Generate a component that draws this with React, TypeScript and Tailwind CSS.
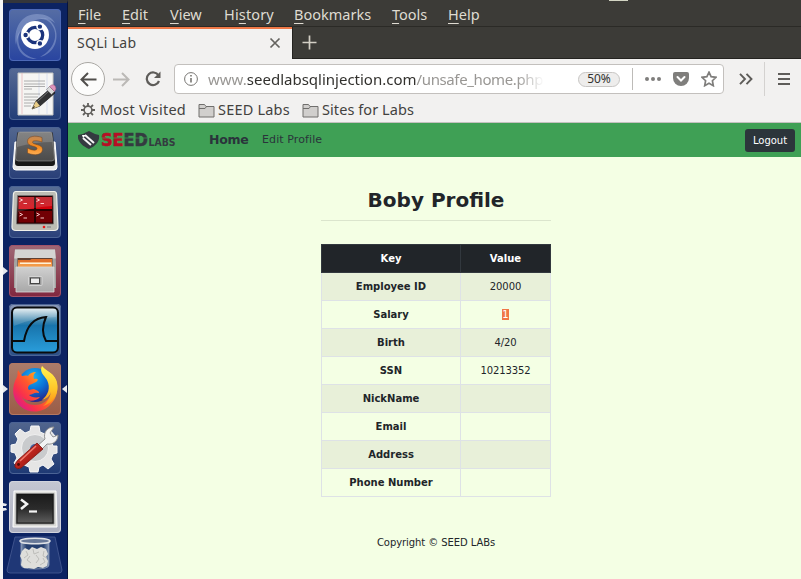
import type { ReactNode } from "react";

const UI = "font-['Noto_Sans','Open_Sans',sans-serif]";
const PAGE = "font-['DejaVu_Sans',sans-serif]";

const Pic = ({ children }: { children: ReactNode }) => (
  <svg viewBox="0 0 52 52" className="block h-[52px] w-[52px]" fill="none">{children}</svg>
);

function Defs() {
  return (
    <svg className="absolute h-0 w-0" aria-hidden="true">
      <defs>
        <linearGradient id="grey" x1="0" y1="0" x2="0" y2="1"><stop stopColor="#d0d0d0" /><stop offset="1" stopColor="#a8a8a8" /></linearGradient>
        <linearGradient id="key" x1="0" y1="0" x2="0" y2="1"><stop stopColor="#6b6b6b" /><stop offset="1" stopColor="#4b4b4b" /></linearGradient>
        <linearGradient id="orange" gradientUnits="userSpaceOnUse" x1="0" y1="10" x2="0" y2="29"><stop stopColor="#c48852" /><stop offset=".5" stopColor="#f68a1c" /><stop offset="1" stopColor="#ffb45c" /></linearGradient>
        <linearGradient id="red" x1="0" y1="0" x2="0" y2="1"><stop stopColor="#b80c14" /><stop offset="1" stopColor="#d4000a" /></linearGradient>
        <linearGradient id="shark" x1="0" y1="0" x2="0" y2="1"><stop stopColor="#f0f4f6" /><stop offset=".12" stopColor="#a8c8d8" /><stop offset=".3" stopColor="#3e87b0" /><stop offset=".4" stopColor="#1874ac" /><stop offset="1" stopColor="#2a9edb" /></linearGradient>
        <linearGradient id="fox" gradientUnits="userSpaceOnUse" x1="8" y1="44" x2="44" y2="12"><stop stopColor="#d81a90" /><stop offset=".25" stopColor="#f9304c" /><stop offset=".5" stopColor="#ff5a2c" /><stop offset=".75" stopColor="#ffa020" /><stop offset="1" stopColor="#ffe03a" /></linearGradient>
        <linearGradient id="flame" x1="0" y1="0" x2="0" y2="1"><stop stopColor="#fff44f" /><stop offset=".6" stopColor="#ffc428" /><stop offset="1" stopColor="#ff8a16" /></linearGradient>
        <radialGradient id="globe" cx=".45" cy=".25" r=".8"><stop stopColor="#16b5f2" /><stop offset=".5" stopColor="#0b6fd4" /><stop offset="1" stopColor="#2a1a80" /></radialGradient>
        <linearGradient id="handle" x1="0" y1="0" x2="1" y2="1"><stop stopColor="#e04a40" /><stop offset=".5" stopColor="#b8231c" /><stop offset="1" stopColor="#7e0d0a" /></linearGradient>
        <linearGradient id="screen" x1="0" y1="0" x2="0" y2="1"><stop stopColor="#1c1c1c" /><stop offset=".5" stopColor="#2b2b2b" /><stop offset="1" stopColor="#5c5c5c" /></linearGradient>
        <linearGradient id="glass" x1="0" y1="0" x2="1" y2="0"><stop stopColor="#8296b5" /><stop offset=".2" stopColor="#26406f" /><stop offset=".8" stopColor="#26406f" /><stop offset="1" stopColor="#8a9cba" /></linearGradient>
      </defs>
    </svg>
  );
}

const Dash = () => (
  <Pic>
    <path d="M7 36C4 20 12 5 28 5c8 0 15 3 18 9-6-5-13-5-19-3C16 14 9 23 7 36z" fill="#a9bbe0" opacity=".42" />
    <path d="M27 11c8-3 15 1 18 9 4 11-3 22-14 28 15-3 21-21 13-33-3-5-8-8-17-4z" fill="#a9bbe0" opacity=".42" />
    <path d="M11 22c-5 14 2 25 17 28C14 51 7 40 8 30c0-3 1-6 3-8z" fill="#a9bbe0" opacity=".4" />
    <circle cx="26" cy="26" r="14" fill="#fff" />
    <circle cx="26" cy="26" r="7.700" stroke="#1b347c" strokeWidth="3.300" />
    <g stroke="#fff" strokeWidth="1.400" fill="#1b347c"><circle cx="16.600" cy="26" r="2.900" /><circle cx="30.900" cy="17.600" r="2.900" /><circle cx="30.900" cy="34.500" r="2.900" /></g>
  </Pic>
);

const Editor = () => (
  <Pic>
    <path d="M9 5h35v42H9z" fill="#f5f5f3" stroke="#c9c9c4" />
    <path d="M13 5v41" stroke="#e8b1b5" strokeWidth=".7" /><path d="M38 5v41M30 5v41" stroke="#c8d2ec" strokeWidth=".6" />
    <path d="M15 13h21M15 16h21M15 18.500h21M15 21h8M15 26h16M15 29h14M15 32h13M15 35h11M15 38h7" stroke="#999" strokeWidth=".8" />
    <path d="m23 41 4-8 15-13 4 5-15 13z" fill="#333" stroke="#191919" strokeWidth=".7" />
    <path d="m23 41 4-8 4 5z" fill="#e9cd87" /><path d="m23 41 2-3 1 1z" fill="#222" />
    <path d="m28.500 33.500 12-11" stroke="#777" /><path d="m37.500 21.500 3-3 5 5-3 3z" fill="#d9d9d9" stroke="#666" strokeWidth=".5" />
    <path d="m40.500 18.500 2-1.500q4-1 4.500 4l-1.500 2.500z" fill="#dd94bd" stroke="#975676" strokeWidth=".5" />
  </Pic>
);

const Sublime = () => (
  <Pic>
    <path d="M6 15h40l2 25q0 3-3 3H7q-3 0-3-3z" fill="#e8e8e8" stroke="#fff" />
    <path d="M8 7q0-2 2-2h32q2 0 2 2l2 29q0 3-3 3H9q-3 0-3-3z" fill="#181818" />
    <path d="M9 7q0-2 2-2h30q2 0 2 2l2.500 24q0 3-3 3H9.500q-3 0-3-3z" fill="url(#key)" stroke="#999" strokeWidth=".6" />
    <path d="M9 7q0-2 2-2h30q2 0 2 2l.5 8Q26 15 8 20z" fill="#fff" opacity=".17" />
    <path d="M33 10.500v4.500c-4-1.500-9.500-2-9.500.3 0 2.500 10 1.700 10 7s-7 7-15 3.700v-5c5.500 3 9.500 2.700 9.500.5 0-2.800-9.500-1.500-9.500-7s8-6.500 14.500-4z" fill="url(#orange)" stroke="#744018" strokeWidth=".5" />
  </Pic>
);

const Terminator = () => (
  <Pic>
    <path d="M7 5.500h38q2.500 0 2.600 3L49 41q0 3.500-4 3.500H7q-4 0-4-3.500L4.400 8.500q.1-3 2.600-3z" fill="#bdbdb5" stroke="#f2f2eb" strokeWidth="1.200" />
    <path d="M8.500 9.500h35.500l.5 28.500H7.500z" fill="#270000" stroke="#777" strokeWidth=".8" />
    <path d="M9.500 11h15.500v12H9.500zm17.500 0h16v12H27z" fill="url(#red)" /><path d="M9.500 25h15.500v11.500H9.500zm17.500 0h16v11.500H27z" fill="#720004" />
    <path d="M9 11h34v9Q26 21 9 26z" fill="#fff" opacity=".14" />
    <path d="m10.500 12.500 3 1.500-3 1.500m4 2h3.500m9.500-5 3 1.500-3 1.500m4 2h3.500M10.500 27l3 1.500-3 1.500m4 2h3.500M27.500 27l3 1.500-3 1.500m4 2h3.500" stroke="#ffdcdc" strokeWidth=".9" />
    <path d="M38 41h4" stroke="#999" strokeWidth="2" /><circle cx="35" cy="41" r="1.300" fill="#ed1717" />
  </Pic>
);

const Files = () => (
  <Pic>
    <path d="M6 4.500h40l1 14V43H5V18.500z" fill="#a4a4a2" /><path d="M6 4.500h40l.8 9H5.200z" fill="#d4d4d2" /><path d="M8.500 13h35v11h-35z" fill="#5e4032" />
    <path d="M9 15h12l1.500-1h20.500v9H9z" fill="#e0702a" /><path d="M9 17.500h34v5H9z" fill="#f39a48" /><path d="M11 17.500h31v1.500H11z" fill="#fff0d8" />
    <path d="M7 22h38v25H7z" fill="url(#grey)" stroke="#dadada" strokeWidth=".8" />
    <rect x="19.500" y="31.500" width="13.500" height="9" rx="1" fill="#9a9a9a" stroke="#e5e5e5" strokeWidth=".7" /><rect x="21.500" y="33" width="9" height="5.500" fill="#ececec" stroke="#444" />
  </Pic>
);

const Wireshark = () => (
  <Pic>
    <rect x="3" y="3.500" width="46" height="45" rx="5" fill="url(#shark)" stroke="#080b0d" strokeWidth="2" />
    <path d="M5 5h42v8Q22 14 5 22z" fill="#fff" opacity=".14" />
    <path d="M3 37h12c2-12 8-23 22-24-4 9-4 17 0 24h12" stroke="#080b0d" strokeWidth="2" />
  </Pic>
);

const Firefox = () => (
  <Pic>
    <circle cx="26" cy="22" r="17" fill="url(#globe)" />
    <path d="M33 3c1 5 7 8 9 15 4 13-4 24-16 24-7 0-11-3-13-8 4 5 14 5 18 0-5 1-9 0-11-2 4 0 5-3 9-2 2 0 1-2-2-3-3-2-5 0-7 0-2-2-1-5 3-6l4-2c3-2 2-4-2-3-1-4 0-5 2-7-4 0-7 2-8 4-3-1-4 0-6 0l-4-6c-1 3 0 5-1 7C2 24 3 36 11 43c9 8 23 7 30-1 7-7 9-16 6-25C44 10 36 8 33 3z" fill="url(#fox)" />
    <path d="M33 3c-3 6 2 9 5 14 4 8 1 15-5 20 4-1 8-4 9-8-1 6-4 11-8 14 13-3 18-19 12-28C43 9 37 8 33 3z" fill="url(#flame)" />
  </Pic>
);

const Settings = () => (
  <Pic>
    <path d="M22 4h8l1 6 5 2 5-4 5 6-4 5 2 5h4v7l-4 1-2 5 3 5-6 5-5-4-4 2-1 5h-8l-1-5-5-2-5 3-5-5 3-5-2-5-4-1v-7l5-1 2-5-3-5 5-5 5 4 5-2z" fill="#e5e5e5" stroke="#f9f9f9" />
    <circle cx="26" cy="26" r="13.500" fill="#c9cbcd" stroke="#f5f5f5" strokeWidth=".8" /><circle cx="26" cy="27" r="5" fill="#4564a2" />
    <path d="m27 25 9-8c-2-6 2-12 9-12l-4 6 3 4 5-2c0 6-5 10-11 9l-7 7z" fill="#f2f2f2" stroke="#919191" />
    <path d="m28 21 6 6L12 46q-4 2-6-1-1-3 3-7z" fill="url(#handle)" stroke="#7c1410" strokeWidth=".8" />
    <path d="m27 24-16 15" stroke="#f17c6f" strokeWidth="1.500" /><circle cx="9.500" cy="42.500" r="1.400" fill="#4d0b09" />
  </Pic>
);

const Terminal = () => (
  <Pic>
    <path d="M5 10h42l1 36H4z" fill="#dcdcd9" stroke="#fff" />
    <path d="M7 12.500h38v30.500H7z" fill="#161616" stroke="#888" strokeWidth=".8" /><path d="M8.500 14h35v27.500h-35z" fill="url(#screen)" />
    <path d="m12 18.500 6 4.500-6 5" stroke="#f4f4f4" strokeWidth="2.500" /><path d="M20 30.500h8" stroke="#f4f4f4" strokeWidth="2.200" />
  </Pic>
);

const Trash = () => (
  <svg viewBox="0 0 60 38" className="mt-[2px] block h-[38px] w-[60px]" fill="none">
    <path d="M10 1h40l7 33q0 3-3 3H5q-3 0-3-3z" fill="#1f3776" stroke="#475c94" strokeWidth=".8" />
    <path d="M16 5v24q0 4 14 4t14-4V5" fill="url(#glass)" stroke="#8d9dba" strokeWidth=".8" />
    <path d="m17 15 3-3 4 2 3-3 5 2 4-2 5 2 2 5-2 3 2 4-1 5-4 2-5-1-4 2-5-1-5 0-3-3 1-5-2-4z" fill="#dededb" />
    <path d="m21 15 2 4-4 3m9-9 1 5 5-2m5-1-1 5 4 2m-17-2-3 4 4 3m5-8 3 4-3 4m7-5 2 4-5 3" stroke="#b9b9b5" strokeWidth=".9" />
    <ellipse cx="30" cy="5" rx="15" ry="2.800" fill="#687998" stroke="#dfe2e6" strokeWidth="1.500" />
  </svg>
);

const launchers = [
  { id: "dash", icon: <Dash />, tile: "bg-linear-to-b from-[#566da4] to-[#2944a0] border-[#4d69b7]" },
  { id: "editor", icon: <Editor />, tile: "bg-linear-to-b from-[#566a95] to-[#233e77] border-[#4b6395]" },
  { id: "sublime", icon: <Sublime />, tile: "bg-linear-to-b from-[#53678f] to-[#293f78] border-[#4b6395]" },
  { id: "terminator", icon: <Terminator />, tile: "bg-linear-to-b from-[#596d94] to-[#2b417a] border-[#4b6395]" },
  { id: "files", icon: <Files />, tile: "bg-linear-to-b from-[#9f6876] to-[#80273f] border-[#a25269]" },
  { id: "wireshark", icon: <Wireshark />, tile: "bg-linear-to-b from-[#8a98b7] to-[#294f86] border-[#4b6395]" },
  { id: "firefox", icon: <Firefox />, tile: "bg-linear-to-b from-[#aa7c6b] to-[#9a5c46] border-[#b37862]" },
  { id: "settings", icon: <Settings />, tile: "bg-linear-to-b from-[#52668e] to-[#1e3974] border-[#4b6395]" },
  { id: "terminal", icon: <Terminal />, tile: "bg-linear-to-b from-[#c5c7d2] to-[#adb0c0] border-[#d1d3dc]" },
];

const LeftArrow = () => (
  <svg viewBox="0 0 5 8" className="absolute top-[22px] -left-[6px] h-2 w-[5px]"><path d="M0 0l5 4-5 4z" fill="#e6e9ee" /></svg>
);

function Launcher() {
  return (
    <aside className="flex w-[65px] shrink-0 flex-col items-center gap-[7px] border-t-[3px] border-r border-t-[#34363b] border-r-[#06133c] bg-[#0c2362] pt-[6px]">
      {launchers.map((l) => (
        <div key={l.id} className={`relative h-[52px] w-[52px] shrink-0 rounded-[4px] ${l.tile}`}>
          {l.icon}
          <span className={`absolute inset-0 rounded-[4px] border ${l.tile.split(" ").pop()}`} />
          {(l.id === "files" || l.id === "firefox") && <LeftArrow />}
          {l.id === "firefox" && (
            <svg viewBox="0 0 5 8" className="absolute top-[22px] -right-[6px] h-2 w-[5px]"><path d="M5 0L0 4l5 4z" fill="#e6e9ee" /></svg>
          )}
          {l.id === "terminal" && (
            <svg viewBox="0 0 5 8" className="absolute top-[22px] -left-[6px] h-2 w-[5px]"><path d="M0 0l4 1-1 2H0zm0 5h3l1 2-4 1z" fill="#e6e9ee" /></svg>
          )}
        </div>
      ))}
      <div className="-mt-[6px]"><Trash /></div>
    </aside>
  );
}

const menus = [
  { pre: "", key: "F", post: "ile", w: "w-[44px]" },
  { pre: "", key: "E", post: "dit", w: "w-[48px]" },
  { pre: "", key: "V", post: "iew", w: "w-[54px]" },
  { pre: "Hi", key: "s", post: "tory", w: "w-[70px] tracking-[0.15px]" },
  { pre: "", key: "B", post: "ookmarks", w: "w-[98px]" },
  { pre: "", key: "T", post: "ools", w: "w-[56px]" },
  { pre: "", key: "H", post: "elp", w: "w-[50px]" },
];

const Folder = () => (
  <svg viewBox="0 0 17 15" className="mt-[2px] h-[15px] w-[17px]" fill="#d1cfcd" stroke="#706f6d"><path d="M1 13V1.500h5.500l1.500 2h8V14H1z" /><path d="M1 5.500h6l1.500-2" fill="none" /></svg>
);

function Chrome() {
  return (
    <header className={`${UI} text-[15px] text-[#43423f]`}>
      <div className="flex h-[27px] items-center border-b border-[#2b2a26] bg-[#3c3b37] pt-[3px] pl-[10px] text-[14.5px] text-[#dfdbd2]">
        {menus.map((m) => (
          <span key={m.key} className={`${m.w} whitespace-nowrap`}>
            {m.pre}<span className="underline decoration-1 underline-offset-[3px]">{m.key}</span>{m.post}
          </span>
        ))}
        <span className="mb-auto ml-[111px] -mt-[3px] h-px w-[19px] bg-[#d3d5c3]" />
      </div>
      <div className="flex h-8 bg-[#3c3b37]">
        <div className="flex w-[224px] items-center justify-between border-t-2 border-[#ef7847] bg-[#f2f1f0] pr-[11px] pb-[2px] pl-[9px] text-[14px]">
          <span className="-mt-[2px] tracking-[0.3px]">SQLi Lab</span>
          <svg viewBox="0 0 12 12" className="h-3 w-3" stroke="#65635f" strokeWidth="1.700"><path d="M1.500 1.500l9 9m0-9l-9 9" /></svg>
        </div>
        <div className="flex flex-1 items-center border-b border-l border-[#242320] pl-[9px]">
          <svg viewBox="0 0 15 15" className="h-[15px] w-[15px]" stroke="#d3cfc5" strokeWidth="1.700"><path d="M7.500 .5v14M.5 7.500h14" /></svg>
        </div>
      </div>
      <div className="flex h-[40px] items-center bg-[#f2f1f0] pl-[3px]">
        <span className="flex h-[34px] w-[34px] items-center justify-center rounded-full border border-[#aaa8a4] bg-[#fcfcfb]">
          <svg viewBox="0 0 17 15" className="h-[15px] w-[17px]" stroke="#514f4c" strokeWidth="2" fill="none"><path d="M16.500 7.500H2M8 1L1.500 7.500 8 14" /></svg>
        </span>
        <svg viewBox="0 0 17 15" className="ml-2 h-[15px] w-[17px]" stroke="#bbb9b6" strokeWidth="2" fill="none"><path d="M0 7.500h15M9 1l6.500 6.500L9 14" /></svg>
        <svg viewBox="0 0 16 16" className="ml-[15px] h-4 w-4" stroke="#5e5c59" strokeWidth="2.200" fill="none"><path d="M13.500 4.500A6.300 6.300 0 1 0 14 10" /><path d="M15.500 .5v6.500H9z" fill="#5e5c59" stroke="none" /></svg>
        <div className="ml-[13px] flex h-[30px] w-[550px] items-center rounded-[4px] border border-[#c3c0bd] bg-white pl-[9px]">
          <svg viewBox="0 0 14 14" className="h-[14px] w-[14px]" stroke="#777572" fill="none"><circle cx="7" cy="7" r="6.400" /><path d="M7 6v4.500M7 3v1.500" strokeWidth="1.600" /></svg>
          <div className="ml-[10px] w-[336px] text-[15px] whitespace-nowrap text-[#999794] [mask-image:linear-gradient(to_right,#000_92%,transparent)]">
            www.<span className="text-[#32312e]">seedlabsqlinjection.com</span><span className="tracking-[-0.38px]">/unsafe_home.php</span>
          </div>
          <span className="ml-[34px] flex h-[15px] w-[42px] items-center justify-center rounded-full border border-[#c8c6c4] bg-[#eeedec] text-[12px] text-[#33322f]">50%</span>
          <span className="ml-3 h-[22px] w-px bg-[#bdbbb8]" />
          <svg viewBox="0 0 16 4" className="ml-3 h-1 w-4" fill="#7f7e7c"><circle cx="2" cy="2" r="2" /><circle cx="8" cy="2" r="2" /><circle cx="14" cy="2" r="2" /></svg>
          <svg viewBox="0 0 16 14" className="ml-3 h-[14px] w-4"><path d="M2 0h12q2 0 2 2v4a8 8 0 0 1-16 0V2q0-2 2-2z" fill="#7f7e7c" /><path d="M4.500 5L8 8.500 11.500 5" stroke="#fff" strokeWidth="2" strokeLinecap="round" fill="none" /></svg>
          <svg viewBox="0 0 16 16" className="ml-3 h-4 w-4" fill="none" stroke="#7f7e7c" strokeWidth="1.700"><path d="M8 1.200l2.100 4.500 4.900.6-3.600 3.400.9 5L8 12.300l-4.300 2.400.9-5L1 6.300l4.900-.6z" /></svg>
        </div>
        <svg viewBox="0 0 14 12" className="ml-[15px] h-3 w-[14px]" fill="none" stroke="#5e5c59" strokeWidth="1.900"><path d="M1 .8L6 6l-5 5.200M7.500 .8l5 5.200-5 5.200" /></svg>
        <span className="ml-[11px] h-[34px] w-px bg-[#d4d2d0]" />
        <svg viewBox="0 0 12 12" className="ml-[13px] h-3 w-3" stroke="#5e5c59" strokeWidth="1.800"><path d="M0 1h12M0 6h12M0 11h12" /></svg>
      </div>
      <div className="flex h-[24px] items-center border-b border-[#c3c1bf] bg-[#f2f1f0] pb-[3px] pl-[13px] text-[14.5px] leading-none whitespace-nowrap">
        <svg viewBox="0 0 14 14" className="mt-px h-[14px] w-[14px]" fill="none" stroke="#62605d"><circle cx="7" cy="7" r="3.900" strokeWidth="1.600" /><path d="M7 0v3M7 11v3M0 7h3M11 7h3M2 2l2.200 2.200M9.800 9.800L12 12M12 2L9.800 4.200M4.200 9.800L2 12" strokeWidth="1.800" /></svg>
        <span className="ml-[5px] w-[98px] tracking-[0.22px]">Most Visited</span>
        <Folder /><span className="ml-[3px] w-[84px] tracking-[0.2px]">SEED Labs</span>
        <Folder /><span className="ml-[3px] tracking-[0.07px]">Sites for Labs</span>
      </div>
    </header>
  );
}

const Logo = () => (
  <div className="flex h-5 w-[98px] items-center">
    <svg viewBox="0 0 22 20" className="h-5 w-[22px]" fill="none">
      <path d="M0 5Q6 4 11 1q5 3 10 4c1 6-3 11-10 14C4 16-1 11 0 5z" fill="#343a40" />
      <path d="m7 5 9 8M5 8l8 7" stroke="#f4f4f4" strokeWidth="2" /><path d="m4 5 4 0-3 3z" fill="#fff" />
    </svg>
    <svg viewBox="0 0 76 20" className="h-5 w-[76px]" fontFamily="DejaVu Sans" fontWeight="700">
      <text x="1" y="16" fontSize="17.500" textLength="47" lengthAdjust="spacingAndGlyphs" stroke="#343a40" strokeWidth=".6" fill="#343a40"><tspan fill="#b70f25" stroke="#b70f25">SE</tspan>ED</text>
      <text x="48.500" y="16" fontSize="10.500" textLength="27" lengthAdjust="spacingAndGlyphs" fill="#343a40">LABS</text>
      <path d="M1 8h46" stroke="#3fa055" strokeWidth=".7" />
    </svg>
  </div>
);

const rows = [
  ["Employee ID", "20000"], ["Salary", "1"], ["Birth", "4/20"], ["SSN", "10213352"],
  ["NickName", ""], ["Email", ""], ["Address", ""], ["Phone Number", ""],
];

export default function App() {
  return (
    <div className="flex h-[579px] w-[801px] overflow-hidden bg-[#f7f7f7] pl-[3px]">
      <Defs />
      <Launcher />
      <div className="flex min-w-0 flex-1 flex-col bg-[#f4ffe4]">
        <Chrome />
        <nav className={`${PAGE} flex h-[34px] shrink-0 items-center bg-[#3fa055] pr-[6px] pl-[10px] text-[#2a343b]`}>
          <Logo />
          <b className="ml-[33px] w-[40px] text-[12.500px] tracking-[-0.3px]">Home</b>
          <span className="ml-[13px] text-[11px] tracking-[0.1px]">Edit Profile</span>
          <button className="ml-auto h-[23px] w-[50px] rounded-[3px] bg-[#2c353b] text-[10px] text-white">Logout</button>
        </nav>
        <main className={`${PAGE} ml-[253px] w-[230px] text-center text-[10px] text-[#212529]`}>
          <h1 className="mt-[31px] h-[33px] border-b border-[#dbe5cd] text-[20px] leading-6 font-bold">Boby Profile</h1>
          <table className="mt-[23px] w-[230px] table-fixed border-collapse">
            <colgroup><col className="w-[139px]" /><col /></colgroup>
            <thead>
              <tr className="h-7 bg-[#212529] text-white">
                <th className="border border-[#32383e] p-0">Key</th>
                <th className="border border-[#32383e] p-0">Value</th>
              </tr>
            </thead>
            <tbody>
              {rows.map(([k, v]) => (
                <tr key={k} className="h-7 odd:bg-[#e8f0d9]">
                  <th className="border border-[#dee2e6] p-0">{k}</th>
                  <td className="border border-[#dee2e6] p-0 tracking-[-0.1px]">
                    {k === "Salary" ? <span className="bg-[#f07746] text-white">{v}</span> : v}
                  </td>
                </tr>
              ))}
            </tbody>
          </table>
          <p className="mt-[38px] leading-4 tracking-[-0.08px]">Copyright © SEED LABs</p>
        </main>
      </div>
    </div>
  );
}
